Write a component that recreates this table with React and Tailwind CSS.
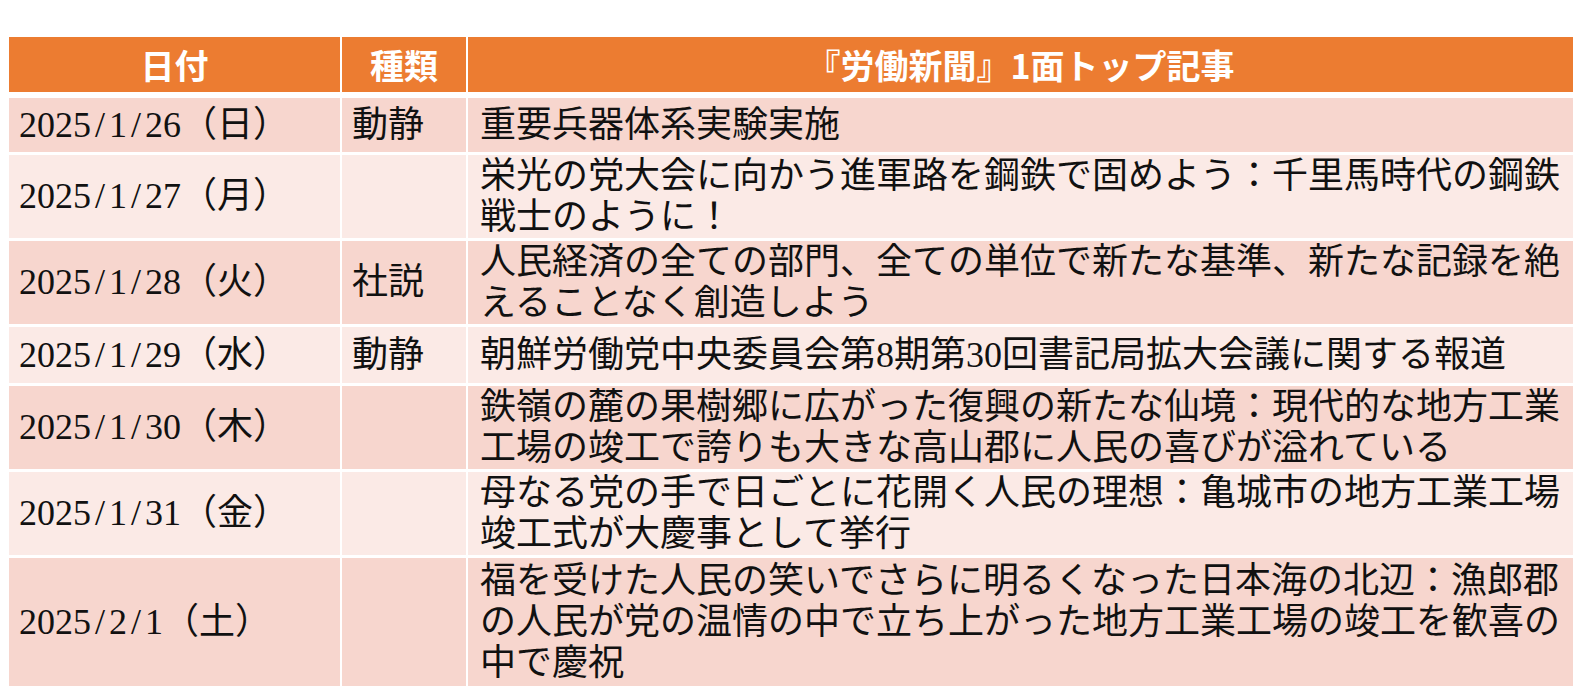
import React from 'react';

const rows = [
    { date: '2025/1/26（日）', kind: '動静', h: 'h-[54px]', lines: ['重要兵器体系実験実施'] },
    { date: '2025/1/27（月）', kind: '', h: 'h-[83px]', lines: ['栄光の党大会に向かう進軍路を鋼鉄で固めよう：千里馬時代の鋼鉄', '戦士のように！'] },
    { date: '2025/1/28（火）', kind: '社説', h: 'h-[83px]', lines: ['人民経済の全ての部門、全ての単位で新たな基準、新たな記録を絶', 'えることなく創造しよう'] },
    { date: '2025/1/29（水）', kind: '動静', h: 'h-[56px]', lines: ['朝鮮労働党中央委員会第8期第30回書記局拡大会議に関する報道'] },
    { date: '2025/1/30（木）', kind: '', h: 'h-[83px]', lines: ['鉄嶺の麓の果樹郷に広がった復興の新たな仙境：現代的な地方工業', '工場の竣工で誇りも大きな高山郡に人民の喜びが溢れている'] },
    { date: '2025/1/31（金）', kind: '', h: 'h-[83px]', lines: ['母なる党の手で日ごとに花開く人民の理想：亀城市の地方工業工場', '竣工式が大慶事として挙行'] },
    { date: '2025/2/1（土）', kind: '', h: 'h-[128px]', lines: ['福を受けた人民の笑いでさらに明るくなった日本海の北辺：漁郎郡', 'の人民が党の温情の中で立ち上がった地方工業工場の竣工を歓喜の', '中で慶祝'] },
];

// slashes in the reference font are half-width, same as the digits
const DateText = ({ text }) => {
    const parts = text.split('/');
    return (
        <span>
            {parts.map((p, i) => (
                <React.Fragment key={i}>
                    {i > 0 && <span className="inline-block w-[18px] text-center">/</span>}
                    {p}
                </React.Fragment>
            ))}
        </span>
    );
};

const App = () => {
    return (
        <div className="w-[1579px] h-[695px] bg-white overflow-hidden">
            <div className="ml-[9px] pt-[37px] w-[1564px] flex flex-col">
                <div className="grid grid-cols-[331px_124px_1105px] gap-x-[2px] h-[55px] mb-[6px] text-white font-bold text-[34px] font-['Noto_Sans_CJK_JP',sans-serif]">
                    <div className="bg-[#ec7c31] flex items-center justify-center">日付</div>
                    <div className="bg-[#ec7c31] flex items-center justify-center">種類</div>
                    <div className="bg-[#ec7c31] flex items-center justify-center">『労働新聞』1面トップ記事</div>
                </div>
                <div className="flex flex-col gap-y-[3px] text-[36px] leading-[41px] text-[#111] font-['Liberation_Serif','Noto_Sans_CJK_JP',serif]">
                    {rows.map((r, i) => {
                        const bg = i % 2 === 0 ? 'bg-[#f7d6ce]' : 'bg-[#fbeae6]';
                        return (
                            <div key={r.date} className={`grid grid-cols-[331px_124px_1105px] gap-x-[2px] ${r.h}`}>
                                <div className={`${bg} flex items-center px-[10px] whitespace-nowrap`}>
                                    <DateText text={r.date} />
                                </div>
                                <div className={`${bg} flex items-center px-[10px] whitespace-nowrap`}>{r.kind}</div>
                                <div className={`${bg} flex flex-col justify-center pl-[12px] whitespace-nowrap`}>
                                    {r.lines.map((l) => <span key={l}>{l}</span>)}
                                </div>
                            </div>
                        );
                    })}
                </div>
            </div>
        </div>
    );
};

export default App;
